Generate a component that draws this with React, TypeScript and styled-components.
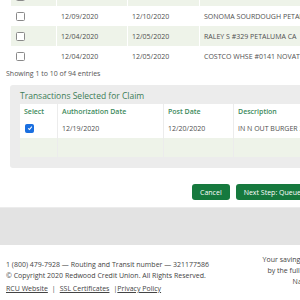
import React from 'react'
import styled, { createGlobalStyle } from 'styled-components'

const GlobalStyle = createGlobalStyle`
	body {
		margin: 0;
		overflow: hidden;
		background: #ffffff;
		font-family: 'Open Sans', 'Liberation Sans', sans-serif;
		color: #555555;
	}
`

interface Txn {
	auth: string
	post: string
	desc: string
}

const rows: Txn[] = [
	{ auth: '12/10/2020', post: '12/11/2020', desc: 'TST* SMOKE TRAIN BBQ' },
	{ auth: '12/09/2020', post: '12/10/2020', desc: 'SONOMA SOURDOUGH PETALUMA' },
	{ auth: '12/04/2020', post: '12/05/2020', desc: 'RALEY S #329 PETALUMA CA' },
	{ auth: '12/04/2020', post: '12/05/2020', desc: 'COSTCO WHSE #0141 NOVATO CA' },
]

const Page = styled.div`
	width: 520px;
	display: flex;
	flex-direction: column;
`

const Results = styled.div`
	margin-top: -14px;
	padding-left: 11px;
`

const Grid = styled.div<{ $cols: string }>`
	display: grid;
	grid-template-columns: ${({ $cols }) => $cols};
	column-gap: 1px;
`

const Cell = styled.div<{ $alt?: boolean; $h: number }>`
	height: ${({ $h }) => $h}px;
	display: flex;
	align-items: center;
	padding-left: 4px;
	font-size: 7px;
	white-space: nowrap;
	overflow: hidden;
	color: #4f4f4f;
	background: ${({ $alt }) => ($alt ? '#eef3e9' : '#ffffff')};
`

const HeadCell = styled(Cell)`
	font-weight: 600;
	color: #3d8a5c;
`

const Box = styled.span<{ $checked?: boolean }>`
	width: 7px;
	height: 7px;
	margin-left: 1px;
	border-radius: 1.5px;
	border: 1px solid ${({ $checked }) => ($checked ? '#1a6fe0' : '#8a8a8a')};
	background: ${({ $checked }) => ($checked ? '#1a6fe0' : '#ffffff')};
	display: flex;
	align-items: center;
	justify-content: center;
`

const Showing = styled.div`
	padding: 3px 0 0 6px;
	font-size: 7px;
	line-height: 10px;
	color: #555555;
`

const Panel = styled.div`
	margin: 6px 0 0 10px;
	padding: 4px 0 11px 10px;
	background: #ececec;
	border-radius: 3px;
`

const PanelTitle = styled.div`
	font-size: 8.5px;
	line-height: 14px;
	color: #3d7d57;
	margin-bottom: 1px;
`

const ButtonRow = styled.div`
	display: flex;
	gap: 6px;
	padding: 16px 0 0 192px;
`

const Button = styled.button`
	height: 16px;
	padding: 0 8px;
	border: none;
	border-radius: 3px;
	background: #16793e;
	color: #ffffff;
	font-family: 'Open Sans', 'Liberation Sans', sans-serif;
	font-size: 7px;
	white-space: nowrap;
`

const GreyBand = styled.div`
	margin-top: 7px;
	height: 37px;
	background: #e3e3e3;
	border-top: 1px solid #ececec;
`

const Footer = styled.div`
	display: flex;
	padding: 14px 0 0 6px;
	font-size: 7px;
	color: #444444;
`

const FooterLeft = styled.div`
	width: 243px;
	line-height: 11px;
`

const FooterRight = styled.div`
	width: 230px;
	text-align: center;
	line-height: 11px;
	margin-top: -5px;
	white-space: nowrap;
`

const Links = styled.div`
	margin-top: 2px;
	display: flex;
	gap: 4px;
`

const Link = styled.a`
	color: #444444;
	text-decoration: underline;
`

const Check = () => (
	<svg width="6" height="6" viewBox="0 0 10 10">
		<path d="M2 5.5 L4.2 7.5 L8 2.8" stroke="#ffffff" strokeWidth="1.8" fill="none" />
	</svg>
)

export default function App() {
	return (
		<Page>
			<GlobalStyle />
			<Results>
				<Grid $cols="45px 70px 71px 260px">
					{rows.map((r, i) => {
						const alt = i % 2 === 0
						return (
							<React.Fragment key={i}>
								<Cell $alt={alt} $h={20}>
									<Box />
								</Cell>
								<Cell $alt={alt} $h={20}>{r.auth}</Cell>
								<Cell $alt={alt} $h={20}>{r.post}</Cell>
								<Cell $alt={alt} $h={20}>{r.desc}</Cell>
							</React.Fragment>
						)
					})}
				</Grid>
			</Results>
			<Showing>Showing 1 to 10 of 94 entries</Showing>
			<Panel>
				<PanelTitle>Transactions Selected for Claim</PanelTitle>
				<Grid $cols="37px 105px 69px 260px">
					<HeadCell $h={14}>Select</HeadCell>
					<HeadCell $h={14}>Authorization Date</HeadCell>
					<HeadCell $h={14}>Post Date</HeadCell>
					<HeadCell $h={14}>Description</HeadCell>
					<Cell $h={20}>
						<Box $checked>
							<Check />
						</Box>
					</Cell>
					<Cell $h={20}>12/19/2020</Cell>
					<Cell $h={20}>12/20/2020</Cell>
					<Cell $h={20}>IN N OUT BURGER 302 PETALUMA CA</Cell>
					<Cell $alt $h={19} />
					<Cell $alt $h={19} />
					<Cell $alt $h={19} />
					<Cell $alt $h={19} />
				</Grid>
			</Panel>
			<ButtonRow>
				<Button>Cancel</Button>
				<Button>Next Step: Queue Claim</Button>
			</ButtonRow>
			<GreyBand />
			<Footer>
				<FooterLeft>
					<div>1 (800) 479-7928 — Routing and Transit number — 321177586</div>
					<div>© Copyright 2020 Redwood Credit Union. All Rights Reserved.</div>
					<Links>
						<Link>RCU Website</Link>
						<span>|</span>
						<Link>SSL Certificates</Link>
						<span>|<Link>Privacy Policy</Link></span>
					</Links>
				</FooterLeft>
				<FooterRight>
					<div>Your savings federally insured to at least $250,000 and backed</div>
					<div>by the full faith and credit of the United States Government</div>
					<div>National Credit Union Administration, a U.S.</div>
				</FooterRight>
			</Footer>
		</Page>
	)
}
